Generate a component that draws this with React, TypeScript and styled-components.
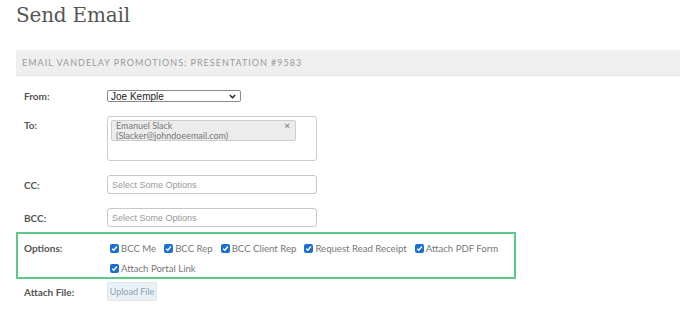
import React from "react";
import styled, { createGlobalStyle } from "styled-components";

const Global = createGlobalStyle`
  html, body { margin: 0; padding: 0; background: #fff; }
  body { font-family: Lato, "Open Sans", sans-serif; }
`;

const Page = styled.div`
  padding: 0 8px 0 16px;
  width: 664px;
`;

const Title = styled.h1`
  margin: 0;
  height: 50px;
  padding-top: 3px;
  box-sizing: border-box;
  font-family: "DejaVu Serif", serif;
  font-weight: normal;
  font-size: 20px;
  letter-spacing: -0.2px;
  color: #555;
`;

const Banner = styled.div`
  height: 25px;
  background: #efefef;
  border-bottom: 1px solid #e6e6e6;
  display: flex;
  align-items: center;
  padding-left: 6px;
  font-family: Lato, sans-serif;
  font-size: 9px;
  letter-spacing: 1px;
  text-transform: uppercase;
  color: #9a9a9a;
`;

const Row = styled.div<{ $top: number; $h?: number }>`
  display: grid;
  grid-template-columns: 91px 1fr;
  align-items: ${(p) => (p.$h ? "start" : "center")};
  margin-top: ${(p) => p.$top}px;
`;

const Label = styled.div<{ $pt?: number; $pl?: number }>`
  padding-left: ${(p) => p.$pl ?? 8}px;
  padding-top: ${(p) => p.$pt ?? 0}px;
  font-size: 10px;
  font-weight: bold;
  color: #555;
`;

const Select = styled.div`
  width: 134px;
  height: 12px;
  box-sizing: border-box;
  border: 1px solid #8a8a8a;
  border-radius: 2px;
  display: flex;
  align-items: center;
  justify-content: space-between;
  padding: 0 4px 0 3px;
  font-family: "Liberation Sans", Arial, sans-serif;
  font-size: 10px;
  color: #222;
`;

const ToBox = styled.div`
  width: 210px;
  height: 45px;
  box-sizing: border-box;
  border: 1px solid #ccc;
  border-radius: 3px;
  padding: 3px 0 0 3px;
`;

const Token = styled.div`
  width: 185px;
  box-sizing: border-box;
  height: 21px;
  background: #ececec;
  border: 1px solid #cdcdcd;
  border-radius: 2px;
  position: relative;
  padding: 0 4px;
  font-size: 9px;
  line-height: 9.5px;
  color: #777;
`;

const Close = styled.span`
  position: absolute;
  right: 5px;
  top: 0;
  font-size: 10px;
  font-weight: bold;
  color: #888;
`;

const Input = styled.div`
  width: 210px;
  height: 19px;
  box-sizing: border-box;
  border: 1px solid #c8c8c8;
  border-radius: 3px;
  display: flex;
  align-items: center;
  padding-left: 4px;
  font-family: "Liberation Sans", Arial, sans-serif;
  font-size: 9px;
  color: #999;
`;

const OptionsBox = styled.div`
  margin-top: 5px;
  width: 500px;
  height: 47px;
  box-sizing: border-box;
  border: 2px solid #5bc98a;
  display: grid;
  grid-template-columns: 89px 1fr;
  padding-top: 8px;
`;

const Checks = styled.div`
  display: flex;
  flex-wrap: wrap;
  column-gap: 8px;
  row-gap: 6px;
  padding-left: 3px;
  width: 400px;
`;

const Check = styled.label`
  display: flex;
  align-items: center;
  gap: 2px;
  font-size: 9.6px;
  color: #777;
  height: 12px;
`;

const Box = styled.span`
  width: 9px;
  height: 9px;
  border-radius: 2px;
  background: #1a6fd6;
  display: inline-flex;
  align-items: center;
  justify-content: center;
`;

const UploadBtn = styled.div`
  width: 50px;
  height: 19px;
  box-sizing: border-box;
  background: #eaf1f6;
  border: 1px solid #dde6ec;
  border-radius: 2px;
  display: flex;
  align-items: center;
  justify-content: center;
  font-size: 9px;
  color: #8ba3b3;
`;

const Tick = () => (
  <svg width="7" height="7" viewBox="0 0 8 8">
    <path d="M1.3 4.2 L3.2 6 L6.8 1.8" stroke="#fff" strokeWidth="1.6" fill="none" />
  </svg>
);

const options = [
  "BCC Me",
  "BCC Rep",
  "BCC Client Rep",
  "Request Read Receipt",
  "Attach PDF Form",
  "Attach Portal Link",
];

export default function App() {
  return (
    <Page>
      <Global />
      <Title>Send Email</Title>
      <Banner>Email Vandelay Promotions: Presentation #9583</Banner>
      <Row $top={14}>
        <Label>From:</Label>
        <Select>
          <span>Joe Kemple</span>
          <svg width="7" height="5" viewBox="0 0 7 5">
            <path d="M0.8 1 L3.5 3.8 L6.2 1" stroke="#222" strokeWidth="1.4" fill="none" />
          </svg>
        </Select>
      </Row>
      <Row $top={14} $h={45}>
        <Label $pt={3}>To:</Label>
        <ToBox>
          <Token>
            Emanuel Slack
            <br />
            (Slacker@johndoeemail.com)
            <Close>×</Close>
          </Token>
        </ToBox>
      </Row>
      <Row $top={14}>
        <Label>CC:</Label>
        <Input>Select Some Options</Input>
      </Row>
      <Row $top={14}>
        <Label>BCC:</Label>
        <Input>Select Some Options</Input>
      </Row>
      <OptionsBox>
        <Label $pl={6}>Options:</Label>
        <Checks>
          {options.map((o) => (
            <Check key={o}>
              <Box>
                <Tick />
              </Box>
              {o}
            </Check>
          ))}
        </Checks>
      </OptionsBox>
      <Row $top={3}>
        <Label>Attach File:</Label>
        <UploadBtn>Upload File</UploadBtn>
      </Row>
    </Page>
  );
}
